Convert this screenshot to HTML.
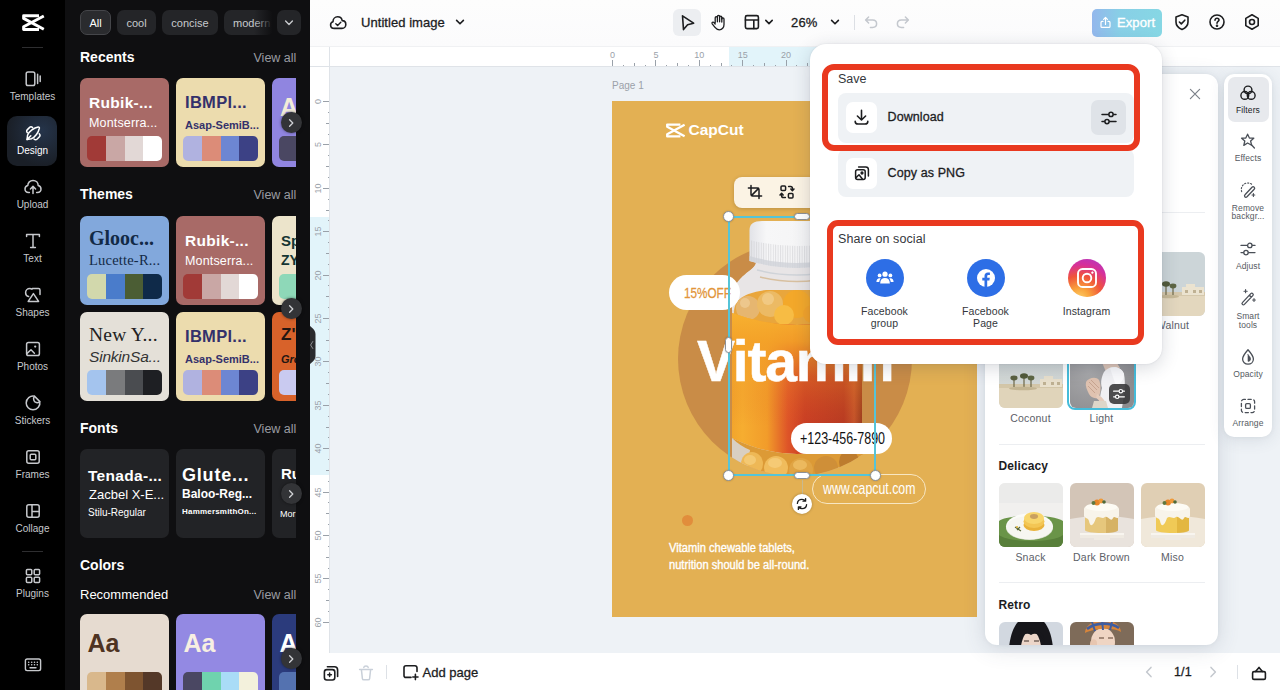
<!DOCTYPE html>
<html>
<head>
<meta charset="utf-8">
<title>Untitled image</title>
<style>
*{box-sizing:border-box;margin:0;padding:0}
html,body{width:1280px;height:690px;overflow:hidden;background:#eef2f6;font-family:"Liberation Sans",sans-serif;}
.abs{position:absolute}
#app{position:relative;width:1280px;height:690px;overflow:hidden}
/* ---------- left sidebar ---------- */
#side{position:absolute;left:0;top:0;width:65px;height:690px;background:#000}
.sitem{position:absolute;left:0;width:65px;text-align:center;color:#c6c8cc;font-size:10px;line-height:12px}
.sitem svg{display:block;margin:0 auto 2px auto}
.sdiv{position:absolute;left:22px;width:21px;height:1px;background:#2e2e30}
#designbtn{position:absolute;left:7px;top:116px;width:50px;height:50px;border-radius:10px;background:radial-gradient(circle at 70% 30%,#25344a 0%,#1a1f27 70%)}
/* ---------- design panel ---------- */
#panel{position:absolute;left:65px;top:0;width:245px;height:690px;background:#0f0f11;overflow:hidden}
.chip{position:absolute;top:10px;height:25px;border-radius:7px;background:#242528;color:#c8cacd;font-size:11px;line-height:27px;text-align:center}
.h1{position:absolute;left:15px;color:#fff;font-weight:bold;font-size:14px;line-height:18px}
.va{position:absolute;left:188.5px;color:#9a9ca1;font-size:12.5px;line-height:16px}
.card{position:absolute;width:89px;height:89px;border-radius:7px;overflow:hidden}
.pal{position:absolute;left:7px;top:57.500px;width:75px;height:25px;border-radius:5px;overflow:hidden;display:flex}
.pal i{flex:1;display:block;height:25px}
.t1,.t2{position:absolute;left:9px;white-space:nowrap;line-height:18px}
.arrow{position:absolute;left:215.500px;width:21px;height:21px;border-radius:11px;background:#333437;box-shadow:0 0 3px rgba(0,0,0,.5)}
.arrow svg{display:block;margin:.5px 0 0 .5px}
/* ---------- main ---------- */
#main{position:absolute;left:310px;top:0;width:970px;height:690px;background:#eef2f6}
#topbar{position:absolute;left:0;top:0;width:970px;height:47px;background:linear-gradient(180deg,#fdfdfd 0%,#fbfbfc 100%);border-bottom:1px solid #f0f1f3}
#hruler{position:absolute;left:0;top:46px;width:970px;height:21px;background:#fff;border-bottom:1px solid #dfe3e8}
#vruler{position:absolute;left:0;top:46px;width:20px;height:607px;background:#fff;border-right:1px solid #dfe3e8}
#botbar{position:absolute;left:0;top:653px;width:970px;height:37px;background:#fff}

.tk{position:absolute;bottom:0;width:1px;background:#9aa1a9;display:block}
.tn{position:absolute;top:4px;width:21px;text-align:center;font-size:9px;line-height:11px;color:#9aa1a9;font-weight:normal;display:block}
.tkv{position:absolute;right:0;height:1px;background:#9aa1a9;display:block}
.tnv{position:absolute;left:-2px;width:21px;height:21px;text-align:center;font-size:9px;line-height:21px;color:#9aa1a9;font-weight:normal;display:block;transform:rotate(-90deg)}
#page{position:absolute;left:302px;top:101px;width:365px;height:516px;background:#e3b053;overflow:hidden}
.tb{font-size:13px;line-height:17px;color:#1c1d1f;-webkit-text-stroke:.3px #1c1d1f;letter-spacing:.15px;white-space:nowrap}
.cx{transform-origin:0 50%;white-space:nowrap}
.hd{position:absolute;width:11px;height:11px;border-radius:50%;background:#fff;border:1px solid #8c9096;box-shadow:0 0 2px rgba(0,0,0,.2)}
.hp{position:absolute;border-radius:4px;background:#fff;border:1px solid #8c9096;box-shadow:0 0 2px rgba(0,0,0,.2)}
.fl{position:absolute;width:64px;text-align:center;font-size:10.500px;line-height:13px;color:#5c6068;letter-spacing:.2px;white-space:nowrap}
.fh{position:absolute;left:13.500px;font-size:12px;line-height:16px;font-weight:bold;color:#1c1d1f;letter-spacing:.1px}
.ri{left:14px}
.rl{position:absolute;left:0;width:48px;text-align:center;font-size:8.500px;line-height:10px;color:#555a62;letter-spacing:.1px}
.sl{position:absolute;top:261px;width:80px;text-align:center;font-size:10.500px;line-height:12.500px;color:#34373c;letter-spacing:.1px}
</style>
</head>
<body>
<div id="app">

<!-- MAIN -->
<div id="main">
  <div id="hruler"><div class="abs" style="left:419px;top:0;width:146px;height:20px;background:#e2f4fa"></div><i class="tk" style="left:302.0px;height:6px"></i><b class="tn" style="left:292.0px">0</b><i class="tk" style="left:345.4px;height:6px"></i><b class="tn" style="left:335.4px">5</b><i class="tk" style="left:388.8px;height:6px"></i><b class="tn" style="left:378.8px">10</b><i class="tk" style="left:432.2px;height:6px"></i><b class="tn" style="left:422.2px">15</b><i class="tk" style="left:475.6px;height:6px"></i><b class="tn" style="left:465.6px">20</b><i class="tk" style="left:519.0px;height:6px"></i><b class="tn" style="left:509.0px">25</b><i class="tk" style="left:562.4px;height:6px"></i><b class="tn" style="left:552.4px">30</b><i class="tk" style="left:605.8px;height:6px"></i><b class="tn" style="left:595.8px">35</b><i class="tk" style="left:649.2px;height:6px"></i><b class="tn" style="left:639.2px">40</b><i class="tk" style="left:312.9px;height:1px"></i><i class="tk" style="left:323.7px;height:3px"></i><i class="tk" style="left:334.6px;height:1px"></i><i class="tk" style="left:356.2px;height:1px"></i><i class="tk" style="left:367.1px;height:3px"></i><i class="tk" style="left:377.9px;height:1px"></i><i class="tk" style="left:399.6px;height:1px"></i><i class="tk" style="left:410.5px;height:3px"></i><i class="tk" style="left:421.4px;height:1px"></i><i class="tk" style="left:443.0px;height:1px"></i><i class="tk" style="left:453.9px;height:3px"></i><i class="tk" style="left:464.8px;height:1px"></i><i class="tk" style="left:486.4px;height:1px"></i><i class="tk" style="left:497.3px;height:3px"></i><i class="tk" style="left:508.1px;height:1px"></i><i class="tk" style="left:529.9px;height:1px"></i><i class="tk" style="left:540.7px;height:3px"></i><i class="tk" style="left:551.5px;height:1px"></i><i class="tk" style="left:573.2px;height:1px"></i><i class="tk" style="left:584.1px;height:3px"></i><i class="tk" style="left:595.0px;height:1px"></i><i class="tk" style="left:616.6px;height:1px"></i><i class="tk" style="left:627.5px;height:3px"></i><i class="tk" style="left:638.3px;height:1px"></i><i class="tk" style="left:660.0px;height:1px"></i></div>
  <div id="vruler"><div class="abs" style="left:0;top:171px;width:19px;height:258px;background:#e2f4fa"></div><i class="tkv" style="top:55.0px;width:6px"></i><b class="tnv" style="top:45.0px">0</b><i class="tkv" style="top:98.4px;width:6px"></i><b class="tnv" style="top:88.4px">5</b><i class="tkv" style="top:141.8px;width:6px"></i><b class="tnv" style="top:131.8px">10</b><i class="tkv" style="top:185.2px;width:6px"></i><b class="tnv" style="top:175.2px">15</b><i class="tkv" style="top:228.6px;width:6px"></i><b class="tnv" style="top:218.6px">20</b><i class="tkv" style="top:272.0px;width:6px"></i><b class="tnv" style="top:262.0px">25</b><i class="tkv" style="top:315.4px;width:6px"></i><b class="tnv" style="top:305.4px">30</b><i class="tkv" style="top:358.8px;width:6px"></i><b class="tnv" style="top:348.8px">35</b><i class="tkv" style="top:402.2px;width:6px"></i><b class="tnv" style="top:392.2px">40</b><i class="tkv" style="top:445.6px;width:6px"></i><b class="tnv" style="top:435.6px">45</b><i class="tkv" style="top:489.0px;width:6px"></i><b class="tnv" style="top:479.0px">50</b><i class="tkv" style="top:532.4px;width:6px"></i><b class="tnv" style="top:522.4px">55</b><i class="tkv" style="top:575.8px;width:6px"></i><b class="tnv" style="top:565.8px">60</b><i class="tkv" style="top:65.8px;width:1px"></i><i class="tkv" style="top:76.7px;width:3px"></i><i class="tkv" style="top:87.5px;width:1px"></i><i class="tkv" style="top:109.2px;width:1px"></i><i class="tkv" style="top:120.1px;width:3px"></i><i class="tkv" style="top:130.9px;width:1px"></i><i class="tkv" style="top:152.6px;width:1px"></i><i class="tkv" style="top:163.5px;width:3px"></i><i class="tkv" style="top:174.3px;width:1px"></i><i class="tkv" style="top:196.0px;width:1px"></i><i class="tkv" style="top:206.9px;width:3px"></i><i class="tkv" style="top:217.8px;width:1px"></i><i class="tkv" style="top:239.4px;width:1px"></i><i class="tkv" style="top:250.3px;width:3px"></i><i class="tkv" style="top:261.1px;width:1px"></i><i class="tkv" style="top:282.9px;width:1px"></i><i class="tkv" style="top:293.7px;width:3px"></i><i class="tkv" style="top:304.5px;width:1px"></i><i class="tkv" style="top:326.2px;width:1px"></i><i class="tkv" style="top:337.1px;width:3px"></i><i class="tkv" style="top:347.9px;width:1px"></i><i class="tkv" style="top:369.6px;width:1px"></i><i class="tkv" style="top:380.5px;width:3px"></i><i class="tkv" style="top:391.3px;width:1px"></i><i class="tkv" style="top:413.1px;width:1px"></i><i class="tkv" style="top:423.9px;width:3px"></i><i class="tkv" style="top:434.8px;width:1px"></i><i class="tkv" style="top:456.4px;width:1px"></i><i class="tkv" style="top:467.3px;width:3px"></i><i class="tkv" style="top:478.1px;width:1px"></i><i class="tkv" style="top:499.8px;width:1px"></i><i class="tkv" style="top:510.7px;width:3px"></i><i class="tkv" style="top:521.5px;width:1px"></i><i class="tkv" style="top:543.2px;width:1px"></i><i class="tkv" style="top:554.1px;width:3px"></i><i class="tkv" style="top:565.0px;width:1px"></i></div>
  <div class="abs" style="left:0;top:46px;width:20px;height:21px;background:#fff;border-right:1px solid #dfe3e8;border-bottom:1px solid #dfe3e8"></div>
  <div id="topbar">
    <svg class="abs" style="left:18px;top:12px" width="22" height="22" viewBox="0 0 22 22" fill="none" stroke="#1c1d1f" stroke-width="1.600" stroke-linecap="round" stroke-linejoin="round"><path d="M6.400 16.400 C4 16.400 2.600 14.800 2.600 13 C2.600 11.400 3.600 10.200 5 9.800 C5 6.800 7 4.800 9.600 4.800 C12 4.800 13.800 6.400 14.200 8.600 C16.400 8.600 17.800 10.200 17.800 12.400 C17.800 14.600 16.200 16.400 14 16.400 Z"/><path d="M7.800 11.800 L9.600 13.600 L12.800 10.200" stroke-width="1.400"/></svg>
    <div class="abs tb" style="left:51px;top:14px;letter-spacing:.05px">Untitled image</div>
    <svg class="abs" style="left:143px;top:15px" width="14" height="14" viewBox="0 0 14 14" fill="none" stroke="#1c1d1f" stroke-width="1.6" stroke-linecap="round" stroke-linejoin="round"><path d="M3.6 5.4 L7 8.8 L10.4 5.4"/></svg>
    <div class="abs" style="left:363px;top:9px;width:28px;height:27px;border-radius:6px;background:#eceef1"></div>
    <svg class="abs" style="left:367px;top:12px" width="20" height="20" viewBox="0 0 20 20" fill="none" stroke="#1c1d1f" stroke-width="1.6" stroke-linecap="round" stroke-linejoin="round"><path d="M5.5 3.8 L16.6 11.2 L10.6 12.8 L6.5 17.6 Z"/></svg>
    <svg class="abs" style="left:398px;top:12px" width="20" height="20" viewBox="0 0 20 20" fill="none" stroke="#1c1d1f" stroke-width="1.3" stroke-linecap="round" stroke-linejoin="round"><path d="M7.2 10.8 V5.8 a1.1 1.1 0 0 1 2.2 0 V4.5 a1.1 1.1 0 0 1 2.2 0 V5.3 a1.1 1.1 0 0 1 2.2 0 V7 a1.1 1.1 0 0 1 2.2 0 V12.4 C16 15.6 14 17.8 11.4 17.8 C9.2 17.8 8 16.8 6.8 15.2 L4.2 11.8 C3.4 10.600 5 9.400 6 10.600 L7.2 12"/><path d="M9.4 5.800 V9.800 M11.6 5 V9.800 M13.8 5.600 V10"/></svg>
    <svg class="abs" style="left:432px;top:12px" width="20" height="20" viewBox="0 0 20 20" fill="none" stroke="#1c1d1f" stroke-width="1.6" stroke-linecap="round" stroke-linejoin="round"><rect x="3.4" y="3.6" width="13" height="13" rx="1.6"/><path d="M3.4 8 H16.4 M11.8 8 V16.4"/></svg>
    <svg class="abs" style="left:452px;top:15px" width="14" height="14" viewBox="0 0 14 14" fill="none" stroke="#1c1d1f" stroke-width="1.6" stroke-linecap="round" stroke-linejoin="round"><path d="M3.8 5.4 L7 8.6 L10.2 5.4"/></svg>
    <div class="abs tb" style="left:481px;top:14px">26%</div>
    <svg class="abs" style="left:518px;top:15px" width="14" height="14" viewBox="0 0 14 14" fill="none" stroke="#1c1d1f" stroke-width="1.6" stroke-linecap="round" stroke-linejoin="round"><path d="M3.6 5.4 L7 8.8 L10.4 5.4"/></svg>
    <div class="abs" style="left:544px;top:15px;width:1px;height:15px;background:#dcdfe4"></div>
    <svg class="abs" style="left:552px;top:13px" width="18" height="18" viewBox="0 0 18 18" fill="none" stroke="#c4c8ce" stroke-width="1.5" stroke-linecap="round" stroke-linejoin="round"><path d="M4 7 H10.6 C13 7 14.6 8.6 14.6 10.8 C14.6 13 13 14.4 10.6 14.4 H8.4 M6.6 4 L3.6 7 L6.6 10"/></svg>
    <svg class="abs" style="left:584px;top:13px" width="18" height="18" viewBox="0 0 18 18" fill="none" stroke="#c4c8ce" stroke-width="1.5" stroke-linecap="round" stroke-linejoin="round"><path d="M14 7 H7.4 C5 7 3.4 8.6 3.4 10.8 C3.4 13 5 14.4 7.4 14.4 H9.6 M11.4 4 L14.4 7 L11.4 10"/></svg>
    <div class="abs" style="left:782px;top:9px;width:70px;height:28px;border-radius:5px;background:linear-gradient(90deg,#93b7ec 0%,#88cfe6 40%,#86d7e4 100%)"></div>
    <svg class="abs" style="left:788px;top:15px" width="15" height="15" viewBox="0 0 15 15" fill="none" stroke="#fff" stroke-width="1.2" stroke-linecap="round" stroke-linejoin="round"><path d="M5 6.4 H4 C3.4 6.4 3 6.8 3 7.4 V11.4 C3 12 3.4 12.4 4 12.4 H11 C11.600 12.4 12 12 12 11.4 V7.4 C12 6.8 11.6 6.400 11 6.4 H10 M7.5 9.400 V2.600 M5.6 4.4 L7.5 2.500 L9.4 4.4"/></svg>
    <div class="abs" style="left:807px;top:14px;color:#fff;font-size:13px;line-height:17px;-webkit-text-stroke:.35px #fff;letter-spacing:.1px">Export</div>
    <svg class="abs" style="left:862px;top:12px" width="20" height="20" viewBox="0 0 20 20" fill="none" stroke="#1c1d1f" stroke-width="1.6" stroke-linecap="round" stroke-linejoin="round"><path d="M10 2.800 L16 5 V10 C16 13.600 13.400 16 10 17.400 C6.6 16 4 13.600 4 10 V5 Z"/><path d="M7.400 10 L9.300 11.900 L12.800 8.200"/></svg>
    <svg class="abs" style="left:897px;top:12px" width="20" height="20" viewBox="0 0 20 20" fill="none" stroke="#1c1d1f" stroke-width="1.6" stroke-linecap="round" stroke-linejoin="round"><circle cx="10" cy="10" r="7"/><path d="M8 8.200 C8 6.900 8.900 6.200 10 6.200 C11.200 6.200 12 7 12 8 C12 9.400 10 9.500 10 11.200"/><circle cx="10" cy="13.700" r=".5" fill="#1c1d1f"/></svg>
    <svg class="abs" style="left:932px;top:12px" width="20" height="20" viewBox="0 0 20 20" fill="none" stroke="#1c1d1f" stroke-width="1.6" stroke-linecap="round" stroke-linejoin="round"><path d="M10 2.800 L16.200 6.400 V13.600 L10 17.200 L3.800 13.600 V6.400 Z"/><circle cx="10" cy="10" r="2.500"/></svg>
</div>
  <div class="abs" style="left:302px;top:79px;font-size:10px;line-height:13px;color:#9ba1a9">Page 1</div>
  <div id="page">
    <!-- capcut logo -->
    <svg class="abs" style="left:52.500px;top:21px" width="21" height="17" viewBox="0 0 21 17" fill="none" stroke="#fff" stroke-width="2.300" stroke-linejoin="round"><path d="M15.400 2.600 H2.200 V4.800 L19.600 14.200"/><path d="M15.400 14.400 H2.200 V12.200 L19.600 2.800"/></svg>
    <div class="abs" style="left:76.500px;top:18.500px;color:#fff;font-weight:bold;font-size:15.500px;line-height:20px;letter-spacing:0">CapCut</div>
    <!-- big circle -->
    <div class="abs" style="left:66px;top:141px;width:234px;height:234px;border-radius:50%;background:#c98c47"></div>
    <!-- bottle -->
    <svg class="abs" style="left:117px;top:116px" width="146" height="260" viewBox="729 217 146 260">
      <defs>
        <clipPath id="bc"><path d="M729 217 H875 V359 H912 A117 117 0 0 1 678 359 H729 Z"/></clipPath>
        <linearGradient id="lab" x1="0" y1="0" x2="1" y2="0"><stop offset="0" stop-color="#f3a52c"/><stop offset=".08" stop-color="#f6ad30"/><stop offset=".27" stop-color="#f29c2a"/><stop offset=".43" stop-color="#de5428"/><stop offset=".56" stop-color="#c93e24"/><stop offset=".86" stop-color="#b83a22"/><stop offset=".94" stop-color="#c4532a"/><stop offset="1" stop-color="#9c3c1e"/></linearGradient>
        <linearGradient id="laby" x1="0" y1="0" x2="0" y2="1"><stop offset="0" stop-color="#f7b030" stop-opacity="1"/><stop offset=".2" stop-color="#f4a228" stop-opacity=".92"/><stop offset=".45" stop-color="#f09a28" stop-opacity=".3"/><stop offset=".8" stop-color="#e06a20" stop-opacity="0"/></linearGradient>
        <linearGradient id="cap" x1="0" y1="0" x2="1" y2="0"><stop offset="0" stop-color="#e2e3e8"/><stop offset=".18" stop-color="#f7f7f8"/><stop offset=".75" stop-color="#f4f4f5"/><stop offset="1" stop-color="#dcdde0"/></linearGradient>
        <pattern id="rdg" width="2.400" height="10" patternUnits="userSpaceOnUse"><rect width="1" height="10" fill="#c9cace" opacity=".55"/></pattern>
      </defs>
      <g clip-path="url(#bc)">
        <!-- glass body -->
        <path d="M756 262 H838 C838 271 860 275 862 297 V480 H732 V297 C734 275 756 271 756 262 Z" fill="#e3d8cc"/>
        <path d="M756 262 H838 C838 271 860 275 862 297 V310 H732 V297 C734 275 756 271 756 262 Z" fill="#e9e8ea" opacity=".85"/>
        <!-- gummies top -->
        <path d="M734 312 C734 296 752 292 766 290 H832 C846 290 860 296 860 312 V330 H734 Z" fill="#e9a63c"/>
        <circle cx="748" cy="308" r="12" fill="#e6b670"/><circle cx="770" cy="304" r="13" fill="#ecba64"/><circle cx="797" cy="304" r="14" fill="#f3a82a"/><circle cx="824" cy="302" r="13" fill="#f5b030"/><circle cx="848" cy="308" r="12" fill="#ef9f28"/><circle cx="784" cy="315" r="10" fill="#f7bc44"/><circle cx="812" cy="314" r="9" fill="#f2a22a"/>
        <circle cx="745" cy="303" r="5" fill="#f0cf98" opacity=".7"/><circle cx="768" cy="299" r="6" fill="#f3d090" opacity=".7"/>
        <!-- neck rings -->
        <path d="M757 270 Q797 280 837 270" stroke="#cfd3d8" stroke-width="1.500" fill="none"/><path d="M760 277 Q797 286 834 277" stroke="#d8c0a0" stroke-width="1.500" fill="none"/>
        <!-- label -->
        <path d="M732 313 Q797 337 862 313 V438 Q797 470 732 438 Z" fill="url(#lab)"/>
        <path d="M732 313 Q797 337 862 313 V438 Q797 470 732 438 Z" fill="url(#laby)"/>
        <!-- gummies bottom -->
        <path d="M732 438 Q797 470 862 438 V480 H732 Z" fill="#dc9a36"/>
        <path d="M732 438 Q740 446 750 450 L746 480 H732 Z" fill="#d9cfc2"/>
        <ellipse cx="752" cy="464" rx="11" ry="12" fill="#eeb856"/><ellipse cx="776" cy="468" rx="12" ry="12" fill="#f0bc5c"/><ellipse cx="801" cy="470" rx="12" ry="12" fill="#e0a444"/><ellipse cx="826" cy="468" rx="12" ry="12" fill="#cf8f38"/><ellipse cx="849" cy="462" rx="10" ry="12" fill="#bd7c2e"/>
        <ellipse cx="750" cy="460" rx="6" ry="5" fill="#f6d080" opacity=".7"/><ellipse cx="775" cy="463" rx="7" ry="5" fill="#f6d080" opacity=".7"/><ellipse cx="800" cy="465" rx="7" ry="5" fill="#f4c870" opacity=".6"/>
        <!-- cap -->
        <path d="M749.500 230 Q749.500 221 762 221 H832 Q844.500 221 844.500 230 V261 Q797 275 749.500 261 Z" fill="url(#cap)"/>
        <path d="M749.500 240 Q797 252 844.500 240 V261 Q797 275 749.500 261 Z" fill="url(#rdg)"/>
        <path d="M749.500 256 V261 Q797 275 844.500 261 V256 Q797 270 749.500 256 Z" fill="#d0d2d8" opacity=".8"/>
      </g>
    </svg>
    <!-- 15%OFF -->
    <div class="abs" style="left:57px;top:174px;width:71px;height:35px;border-radius:18px;background:#fff"></div>
    <div class="abs cx" style="left:72px;top:183px;color:#e2953a;font-size:15px;line-height:18px;transform:scaleX(.78);-webkit-text-stroke:.3px #e2953a">15%OFF</div>
    <!-- Vitamin -->
    <div class="abs" style="left:85px;top:230px;color:#fff;font-weight:bold;font-size:57px;line-height:60px;letter-spacing:-1.200px;white-space:nowrap;-webkit-text-stroke:.5px #fff">Vitamin</div>
    <!-- phone -->
    <div class="abs" style="left:179px;top:322px;width:101px;height:31px;border-radius:16px;background:#fff"></div>
    <div class="abs cx" style="left:188px;top:328px;color:#111;font-size:16px;line-height:20px;transform:scaleX(.78)">+123-456-7890</div>
    <!-- www -->
    <div class="abs" style="left:200px;top:373px;width:114px;height:30px;border-radius:15px;border:1.500px solid #f7e6c2"></div>
    <div class="abs cx" style="left:211px;top:378px;color:#fff;font-size:16px;line-height:20px;transform:scaleX(.77)">www.capcut.com</div>
    <!-- dot -->
    <div class="abs" style="left:70px;top:414px;width:11px;height:11px;border-radius:50%;background:#e18d3c"></div>
    <div class="abs cx" style="left:57px;top:439px;color:#fff;font-size:12.500px;line-height:16.500px;transform:scaleX(.89);-webkit-text-stroke:.35px #fff">Vitamin chewable tablets,<br>nutrition should be all-round.</div>
</div>

  <!-- floating toolbar -->
  <div class="abs" style="left:424px;top:177px;width:150px;height:31px;border-radius:8px;background:#fbf3e4;box-shadow:0 1px 4px rgba(0,0,0,.18)"></div>
  <svg class="abs" style="left:435px;top:182px" width="20" height="20" viewBox="0 0 20 20" fill="none" stroke="#1c1d1f" stroke-width="1.500" stroke-linecap="round" stroke-linejoin="round"><path d="M6 3.400 V12.400 C6 13.400 6.600 14 7.600 14 H16.600 M3.400 6 H12.400 C13.400 6 14 6.600 14 7.600 V16.600 M13.600 6.400 L6.400 13.600" /></svg>
  <svg class="abs" style="left:467px;top:182px" width="20" height="20" viewBox="0 0 20 20" fill="none" stroke="#1c1d1f" stroke-width="1.500" stroke-linecap="round" stroke-linejoin="round"><rect x="4" y="4" width="4.600" height="4.600" rx="1"/><rect x="11.400" y="11.400" width="4.600" height="4.600" rx="1"/><path d="M11.600 4.400 H13.600 C14.800 4.400 15.400 5 15.400 6.200 V8.400 M13.800 7 L15.400 8.600 L17 7 M8.400 15.600 H6.400 C5.200 15.600 4.600 15 4.600 13.800 V11.600 M3 13 L4.600 11.400 L6.200 13"/></svg>
  <!-- selection -->
  <div class="abs" style="left:417.500px;top:216px;width:148.500px;height:260px;border:2px solid #55c4d8"></div>
  <div class="abs" style="left:492px;top:480px;width:1px;height:14px;background:#c9b98f"></div>
  <div class="hd" style="left:413px;top:211px"></div>
  <div class="hd" style="left:413px;top:469.500px"></div>
  <div class="hd" style="left:559.500px;top:469.500px"></div>
  <div class="hp" style="left:484px;top:212.500px;width:16px;height:7px"></div>
  <div class="hp" style="left:484px;top:471.500px;width:16px;height:7px"></div>
  <div class="hp" style="left:415px;top:337px;width:7px;height:16px"></div>
  <div class="abs" style="left:482px;top:494px;width:20px;height:20px;border-radius:50%;background:#fff;box-shadow:0 0 3px rgba(0,0,0,.3)"></div>
  <svg class="abs" style="left:484px;top:496px" width="16" height="16" viewBox="0 0 16 16" fill="none" stroke="#1c1d1f" stroke-width="1.300" stroke-linecap="round" stroke-linejoin="round"><path d="M3.400 7.400 C3.600 5 5.600 3.400 8 3.400 C9.400 3.400 10.600 4 11.400 5 M12.600 8.600 C12.400 11 10.400 12.600 8 12.600 C6.600 12.600 5.400 12 4.600 11 M11.600 2.600 V5.200 H9 M4.400 13.400 V10.800 H7"/></svg>
  <div id="botbar">
    <svg class="abs" style="left:11px;top:10px" width="20" height="20" viewBox="0 0 20 20" fill="none" stroke="#1c1d1f" stroke-width="1.6" stroke-linecap="round" stroke-linejoin="round"><rect x="3.400" y="6.600" width="10.400" height="10.400" rx="2.400"/><path d="M6.400 3.800 H13.400 C15.400 3.800 16.600 5 16.600 7 V13.400"/><path d="M8.600 10 V13.600 M6.800 11.800 H10.400" stroke-width="1.500"/></svg>
    <svg class="abs" style="left:46px;top:10px" width="20" height="20" viewBox="0 0 20 20" fill="none" stroke="#c9d0d9" stroke-width="1.500" stroke-linecap="round" stroke-linejoin="round"><path d="M3.600 6.600 H16.400 M5.400 6.600 L6.400 15.600 C6.500 16.400 7 16.800 7.800 16.800 H12.200 C13 16.800 13.500 16.400 13.600 15.600 L14.600 6.600 M7.800 4.400 C8 3.400 9 3 10 3 C11 3 12 3.400 12.200 4.400"/></svg>
    <div class="abs" style="left:76px;top:12px;width:1px;height:14px;background:#dde1e6"></div>
    <svg class="abs" style="left:90px;top:9px" width="22" height="22" viewBox="0 0 22 22" fill="none" stroke="#1c1d1f" stroke-width="1.6" stroke-linecap="round" stroke-linejoin="round"><path d="M17 9.400 V5.800 C17 4.600 16.200 3.800 15 3.800 H6 C4.800 3.800 4 4.600 4 5.800 V13.400 C4 14.600 4.800 15.400 6 15.400 H11"/><path d="M15.400 12.400 V17.600 M12.800 15 H18"/></svg>
    <div class="abs tb" style="left:112.500px;top:11px;letter-spacing:0">Add page</div>
    <svg class="abs" style="left:831px;top:11px" width="16" height="16" viewBox="0 0 16 16" fill="none" stroke="#c4c8ce" stroke-width="1.500" stroke-linecap="round" stroke-linejoin="round"><path d="M10 3.400 L5.600 8 L10 12.600"/></svg>
    <div class="abs tb" style="left:864px;top:11px;font-size:12.5px">1/1</div>
    <svg class="abs" style="left:895px;top:11px" width="16" height="16" viewBox="0 0 16 16" fill="none" stroke="#c4c8ce" stroke-width="1.500" stroke-linecap="round" stroke-linejoin="round"><path d="M6 3.400 L10.400 8 L6 12.600"/></svg>
    <div class="abs" style="left:927px;top:12px;width:1px;height:14px;background:#dde1e6"></div>
    <svg class="abs" style="left:939px;top:10px" width="20" height="20" viewBox="0 0 20 20" fill="none" stroke="#1c1d1f" stroke-width="1.6" stroke-linecap="round" stroke-linejoin="round"><rect x="3.600" y="8.600" width="12.800" height="7.800" rx="1.400"/><path d="M6.600 8.400 L10 4.400 L13.400 8.400"/></svg>
</div>
</div>


<!-- FILTER PANEL -->
<div id="fpanel" class="abs" style="left:985px;top:74px;width:233px;height:571px;border-radius:12px;background:#fff;overflow:hidden;box-shadow:0 4px 22px rgba(60,75,100,.16),0 0 4px rgba(90,100,120,.08)">
  <svg class="abs" style="left:202px;top:12px" width="16" height="16" viewBox="0 0 16 16" fill="none" stroke="#7d828a" stroke-width="1.200" stroke-linecap="round"><path d="M3.400 3.400 L12.600 12.600 M12.600 3.400 L3.400 12.600"/></svg>
  <div class="abs" style="left:13.500px;top:138px;width:206px;height:1px;background:#eceef1"></div>
  <svg class="abs" style="left:155.500px;top:178px;border-radius:6px;" width="64" height="64" viewBox="0 0 64 64"><rect width="64" height="64" fill="#ccd5d8"/><rect y="40" width="64" height="24" fill="#e3d7be"/><rect y="40" width="64" height="4" fill="#d5c8ac"/><rect x="41" y="35" width="22" height="8" fill="#ebe3d0"/><rect x="45" y="32" width="9" height="4" fill="#ebe3d0"/><rect x="44" y="38" width="3" height="3" fill="#bfb193"/><rect x="52" y="38" width="3" height="3" fill="#bfb193"/><rect x="58" y="38" width="3" height="3" fill="#bfb193"/><path d="M25 44 V33 M32 43 V35" stroke="#6d6848" stroke-width="1.200"/><ellipse cx="25" cy="32" rx="4" ry="2.800" fill="#525a3a"/><ellipse cx="32" cy="34" rx="3.400" ry="2.400" fill="#5e6644"/><ellipse cx="28" cy="44.500" rx="10" ry="1.800" fill="#c6b896"/></svg>
  <div class="fl" style="left:155.500px;top:245px">Walnut</div>
  <svg class="abs" style="left:13.500px;top:270px;border-radius:6px;" width="64" height="64" viewBox="0 0 64 64"><defs><linearGradient id="skyD" x1="0" y1="0" x2="0" y2="1"><stop offset="0" stop-color="#c9d2d5"/><stop offset="1" stop-color="#dadcd6"/></linearGradient></defs><rect width="64" height="64" fill="url(#skyD)"/><rect y="40" width="64" height="24" fill="#e0d4ba"/><rect y="40" width="64" height="4" fill="#d3c6a8"/><rect x="41" y="35" width="22" height="8" fill="#e9e0cc"/><rect x="45" y="32" width="9" height="4" fill="#e9e0cc"/><rect x="44" y="38" width="3" height="3" fill="#bfb193"/><rect x="52" y="38" width="3" height="3" fill="#bfb193"/><rect x="58" y="38" width="3" height="3" fill="#bfb193"/><path d="M15 43 V35 M25 44 V33 M32 43 V35" stroke="#6d6848" stroke-width="1.200"/><ellipse cx="15" cy="34" rx="3.600" ry="2.400" fill="#5a6040"/><ellipse cx="25" cy="32" rx="4" ry="2.800" fill="#525a3a"/><ellipse cx="32" cy="34" rx="3.400" ry="2.400" fill="#5e6644"/><ellipse cx="24" cy="44.500" rx="14" ry="1.800" fill="#c2b492"/></svg>
  <div class="abs" style="left:82px;top:267px;width:69px;height:69px;border-radius:8px;border:2px solid #45bcda"></div>
  <svg class="abs" style="left:85px;top:270px;border-radius:6px;" width="64" height="64" viewBox="0 0 64 64"><defs><radialGradient id="lg" cx=".3" cy=".45" r=".7"><stop offset="0" stop-color="#a8a8aa"/><stop offset="1" stop-color="#8d8d90"/></radialGradient></defs><rect width="64" height="64" fill="url(#lg)"/><path d="M30 8 C34 12 40 14 44 14 L50 24 L36 28 C34 22 30 16 30 8 Z" fill="#dcc4b6"/><path d="M34 28 C38 22 50 20 54 30 C56 40 54 52 52 64 H28 C30 56 30 50 32 44 C30 38 32 32 34 28 Z" fill="#f1f1f4"/><path d="M40 24 C46 22 52 24 54 30 C54 36 50 40 46 42 Z" fill="#fbfbfd"/><path d="M16 38 C18 34 26 32 29 36 C31 40 31 48 29 52 C27 56 21 54 19 50 C17 46 15 42 16 38 Z" fill="#dfc2b0"/><path d="M19 38 L27 46 M21 36 L29 44 M18 42 L25 49" stroke="#c4a08c" stroke-width=".9"/><path d="M27 50 C31 52 35 56 37 62 L33 64 C31 58 29 56 26 54 Z" fill="#e4cbbb"/><path d="M24 57 H36 L38 64 H22 Z" fill="#ddd6c9"/></svg>
  <div class="abs" style="left:124px;top:309.500px;width:20.500px;height:20px;border-radius:5px;background:rgba(58,58,60,.9)"></div>
  <svg class="abs" style="left:126.300px;top:311.500px" width="16" height="16" viewBox="0 0 16 16" fill="none" stroke="#fff" stroke-width="1.200" stroke-linecap="round"><path d="M2.600 5.200 H13.400 M2.600 10.800 H13.400"/><circle cx="9.800" cy="5.200" r="1.700" fill="#38383c"/><circle cx="6.200" cy="10.800" r="1.700" fill="#38383c"/></svg>
  <div class="fl" style="left:13.500px;top:338px">Coconut</div>
  <div class="fl" style="left:84.500px;top:338px">Light</div>
  <div class="abs" style="left:13.500px;top:370px;width:206px;height:1px;background:#eceef1"></div>
  <div class="fh" style="top:384px">Delicacy</div>
  <svg class="abs" style="left:13.500px;top:409px;border-radius:6px;" width="64" height="64" viewBox="0 0 64 64"><rect width="64" height="64" fill="#f1f0ee"/><rect width="64" height="20" fill="#ebebea"/><path d="M0 38 C10 31 54 31 64 38 V64 H0 Z" fill="#6a9448"/><path d="M0 52 C10 60 54 60 64 52 V64 H0 Z" fill="#587f3a"/><ellipse cx="30.500" cy="43.500" rx="23.500" ry="13" fill="#fbfbf8"/><ellipse cx="30.500" cy="45" rx="23.500" ry="12" fill="#f3f3ee" opacity=".7"/><ellipse cx="35" cy="42" rx="10.500" ry="6" fill="#e9b23a"/><ellipse cx="35" cy="38.500" rx="10.500" ry="6.500" fill="#f3c654"/><ellipse cx="35" cy="35" rx="10" ry="6" fill="#f8d66c"/><ellipse cx="35" cy="33.500" rx="4" ry="2.400" fill="#c9a060"/><path d="M16 44 L22 48 M18 47 L21 44" stroke="#5b6a3a" stroke-width="1.200"/><circle cx="18" cy="44" r="1" fill="#e0b030"/></svg><svg class="abs" style="left:84.500px;top:409px;border-radius:6px;" width="64" height="64" viewBox="0 0 64 64"><rect width="64" height="64" fill="#d3c5b7"/><path d="M0 36 C20 32 44 32 64 36 V64 H0 Z" fill="#e9e3dd"/><path d="M10 51 H54 V55 H40 V57 H24 V55 H10 Z" fill="#efeae2"/><rect x="10" y="50" width="44" height="2" fill="#f8f5ef"/><path d="M15 30 H48 V47 C48 51 15 51 15 47 Z" fill="#e6c77c"/><path d="M36 30 H48 V47 C48 49 42 50 36 50 Z" fill="#c9a050" opacity=".55"/><path d="M14 26 C14 19 49 19 49 26 V33 C47 38 45 32 43 35 C41 40 38 32 35 34 C32 37 29 32 26 35 C23 44 20 44 19 38 C18 34 15 36 14 33 Z" fill="#f8f4ea"/><ellipse cx="31.500" cy="24" rx="16" ry="4" fill="#fdfbf4"/><circle cx="27" cy="19.500" r="3" fill="#e8862a"/><circle cx="31" cy="18" r="2.400" fill="#ef9a3a"/><circle cx="23.500" cy="20" r="2" fill="#60783e"/><circle cx="34" cy="19" r="1.800" fill="#4f6a3a"/></svg><svg class="abs" style="left:155.500px;top:409px;border-radius:6px;" width="64" height="64" viewBox="0 0 64 64"><rect width="64" height="64" fill="#e0cfb4"/><path d="M0 36 C20 32 44 32 64 36 V64 H0 Z" fill="#f0e8da"/><path d="M10 51 H54 V55 H40 V57 H24 V55 H10 Z" fill="#efeae2"/><rect x="10" y="50" width="44" height="2" fill="#f8f5ef"/><path d="M15 30 H48 V47 C48 51 15 51 15 47 Z" fill="#f0ca56"/><path d="M36 30 H48 V47 C48 49 42 50 36 50 Z" fill="#d9a830" opacity=".55"/><path d="M14 26 C14 19 49 19 49 26 V33 C47 38 45 32 43 35 C41 40 38 32 35 34 C32 37 29 32 26 35 C23 44 20 44 19 38 C18 34 15 36 14 33 Z" fill="#f8f4ea"/><ellipse cx="31.500" cy="24" rx="16" ry="4" fill="#fdfbf4"/><circle cx="27" cy="19.500" r="3" fill="#e8862a"/><circle cx="31" cy="18" r="2.400" fill="#ef9a3a"/><circle cx="23.500" cy="20" r="2" fill="#60783e"/><circle cx="34" cy="19" r="1.800" fill="#4f6a3a"/></svg>
  <div class="fl" style="left:13.500px;top:476.500px">Snack</div>
  <div class="fl" style="left:84.500px;top:476.500px">Dark Brown</div>
  <div class="fl" style="left:155.500px;top:476.500px">Miso</div>
  <div class="abs" style="left:13.500px;top:508px;width:206px;height:1px;background:#eceef1"></div>
  <div class="fh" style="top:523px">Retro</div>
  <svg class="abs" style="left:13.500px;top:548px;border-radius:6px;" width="64" height="64" viewBox="0 0 64 64"><rect width="64" height="64" fill="#d2d8e0"/><path d="M12 64 C6 30 10 -6 32 -6 C54 -6 58 30 52 64 Z" fill="#17171b"/><path d="M21 64 C19 30 22 9 32 9 C42 9 45 30 43 64 Z" fill="#ecd6c9"/><path d="M18 20 C20 2 44 2 46 20 C42 12 36 10 32 13 C28 10 22 12 18 20 Z" fill="#17171b"/><path d="M25 19 H30 M35 19 H40" stroke="#3a2a24" stroke-width="1.200"/></svg><svg class="abs" style="left:84.500px;top:548px;border-radius:6px;" width="64" height="64" viewBox="0 0 64 64"><rect width="64" height="64" fill="#7e6b59"/><ellipse cx="33" cy="20" rx="12" ry="14" fill="#efd5c3"/><path d="M15 11 C16 -6 50 -6 51 10 C44 5 24 6 15 11 Z" fill="#d8853a"/><path d="M17 7 C26 0 40 0 49 6" stroke="#3f5da0" stroke-width="2.600" fill="none"/><path d="M22 0 L25 9 M32 -2 L33 8 M42 0 L40 8" stroke="#3f5da0" stroke-width="2"/><path d="M20 22 C20 16 27 16 27 21 V34 H20 Z" fill="#e7c6b0"/><path d="M29 16 H34 M38 16 H43" stroke="#5a4030" stroke-width="1.200"/></svg>
</div>
<!-- RIGHT TOOLBAR -->
<div id="rtool" class="abs" style="left:1224px;top:74px;width:48px;height:363px;border-radius:10px;background:#fff;box-shadow:0 3px 16px rgba(60,75,100,.12),0 0 4px rgba(90,100,120,.08)">
  <div class="abs" style="left:4px;top:3px;width:41px;height:45px;border-radius:7px;background:#e7e9ed"></div>
  <svg class="abs ri" style="top:9px" width="20" height="20" viewBox="0 0 20 20" fill="none" stroke="#1c1d1f" stroke-width="1.400"><circle cx="10" cy="7" r="3.900"/><circle cx="6.800" cy="12.400" r="3.900"/><circle cx="13.200" cy="12.400" r="3.900"/></svg>
  <div class="rl" style="top:30.500px;color:#1c1d1f">Filters</div>
  <svg class="abs ri" style="top:57px" width="20" height="20" viewBox="0 0 20 20" fill="none" stroke="#4a4f57" stroke-width="1.300" stroke-linecap="round" stroke-linejoin="round"><path d="M9.600 3.200 L11.400 7 L15.800 7.200 L12.600 10 L13.600 14.200 L9.600 12 L5.800 14.400 L6.800 10 L3.600 7.200 L7.800 7 Z"/><path d="M13.400 13.800 L16.400 17"/></svg>
  <div class="rl" style="top:79px">Effects</div>
  <svg class="abs ri" style="top:106px" width="20" height="20" viewBox="0 0 20 20" fill="none" stroke="#4a4f57" stroke-width="1.300" stroke-linecap="round" stroke-linejoin="round"><path d="M13.600 4.200 C11.400 2.600 8 2.600 5.800 4.400 C3.200 6.400 2.600 10 4.200 12.800" stroke-dasharray="1.200 1.800" stroke-width="1.100"/><path d="M7 14.800 L14 7.200 C14.600 6.600 15.600 6.600 16.200 7.200 C16.800 7.800 16.800 8.600 16.200 9.200 L9 16.800 C8.400 17.400 7.400 17.400 6.800 16.800 C6.400 16.200 6.400 15.400 7 14.800 Z"/><path d="M15.400 13.600 V16.400 M14 15 H16.800" stroke-width="1.100"/></svg>
  <div class="rl" style="top:129.500px;line-height:8.600px">Remove<br>backgr...</div>
  <svg class="abs ri" style="top:164.500px" width="20" height="20" viewBox="0 0 20 20" fill="none" stroke="#4a4f57" stroke-width="1.300" stroke-linecap="round" stroke-linejoin="round"><path d="M3 6.400 H17 M3 13.600 H17"/><circle cx="11.800" cy="6.400" r="2.200" fill="#fff"/><circle cx="8" cy="13.600" r="2.200" fill="#fff"/></svg>
  <div class="rl" style="top:187px">Adjust</div>
  <svg class="abs ri" style="top:213px" width="20" height="20" viewBox="0 0 20 20" fill="none" stroke="#4a4f57" stroke-width="1.300" stroke-linecap="round" stroke-linejoin="round"><path d="M4.400 15.600 L12.800 6.600 C13.400 6 14.200 6 14.800 6.600 C15.400 7.200 15.400 8 14.800 8.600 L6.400 17.400 C5.800 18 5 18 4.400 17.400 C3.800 16.800 3.800 16.200 4.400 15.600 Z M11.400 8.200 L13.200 10"/><path d="M7.600 2.600 V5.800 M6 4.200 H9.200 M16 11.600 V14.400 M14.600 13 H17.400" stroke-width="1.100"/></svg>
  <div class="rl" style="top:238px;line-height:9px">Smart<br>tools</div>
  <svg class="abs ri" style="top:273px" width="20" height="20" viewBox="0 0 20 20" fill="none" stroke="#4a4f57" stroke-width="1.300" stroke-linecap="round" stroke-linejoin="round"><path d="M10 2.800 C13 6.200 15.400 9 15.400 12 C15.400 15 13 17.200 10 17.200 C7 17.200 4.600 15 4.600 12 C4.600 9 7 6.200 10 2.800 Z"/><path d="M10 7.600 V14.400 C11.600 14.400 12.600 13.400 12.600 12 C12.600 10.400 11.400 9.200 10 7.600 Z" fill="#4a4f57" stroke-width=".6"/></svg>
  <div class="rl" style="top:295px">Opacity</div>
  <svg class="abs ri" style="top:321.500px" width="20" height="20" viewBox="0 0 20 20" fill="none" stroke="#4a4f57" stroke-width="1.300" stroke-linecap="round" stroke-linejoin="round"><rect x="3.400" y="3.400" width="13.200" height="13.200" rx="2.400" stroke-dasharray="3.200 2.600" stroke-dashoffset="1.600"/><rect x="7.600" y="7.600" width="4.800" height="4.800" rx="1.200"/></svg>
  <div class="rl" style="top:344px">Arrange</div>
</div>

<!-- EXPORT POPUP -->
<div id="popup" class="abs" style="left:810px;top:43.500px;width:352px;height:320px;border-radius:16px;background:#fff;box-shadow:0 4px 18px rgba(40,50,70,.18),0 0 2px rgba(40,50,70,.12)">
  <div class="abs" style="left:28px;top:27px;font-size:12.500px;line-height:16px;color:#34373c;letter-spacing:0">Save</div>
  <div class="abs" style="left:28px;top:49px;width:296px;height:50px;border-radius:8px;background:#eff2f5"></div>
  <div class="abs" style="left:36px;top:58px;width:31px;height:31px;border-radius:7px;background:#fff"></div>
  <svg class="abs" style="left:41px;top:63px" width="21" height="21" viewBox="0 0 21 21" fill="none" stroke="#1c1d1f" stroke-width="1.600" stroke-linecap="round" stroke-linejoin="round"><path d="M10.500 3.400 V12.800 M6.400 9 L10.500 13 L14.600 9 M4.200 14.400 C4.200 16.400 5 17 7 17 H14 C16 17 16.800 16.400 16.800 14.400"/></svg>
  <div class="abs tb" style="left:77.500px;top:65.500px;font-size:12.500px;letter-spacing:.1px">Download</div>
  <div class="abs" style="left:281px;top:56.500px;width:35px;height:35px;border-radius:7px;background:#dfe3e8"></div>
  <svg class="abs" style="left:288.500px;top:64px" width="20" height="20" viewBox="0 0 20 20" fill="none" stroke="#1c1d1f" stroke-width="1.500" stroke-linecap="round"><path d="M3 6.400 H17 M3 13.600 H17"/><circle cx="12" cy="6.400" r="2.100" fill="#dfe3e8"/><circle cx="8" cy="13.600" r="2.100" fill="#dfe3e8"/></svg>
  <div class="abs" style="left:28px;top:105px;width:296px;height:48px;border-radius:8px;background:#eff2f5"></div>
  <div class="abs" style="left:36px;top:114px;width:31px;height:31px;border-radius:7px;background:#fff"></div>
  <svg class="abs" style="left:41.500px;top:119.500px" width="20" height="20" viewBox="0 0 20 20" fill="none" stroke="#1c1d1f" stroke-width="1.500" stroke-linecap="round" stroke-linejoin="round"><rect x="3.600" y="6.800" width="9.600" height="9.600" rx="2"/><path d="M6.600 4 H13.800 C15.400 4 16.400 5 16.400 6.600 V13"/><path d="M4 14.600 L7 11.800 L10.400 16"/><circle cx="10" cy="10" r=".900" fill="#1c1d1f"/></svg>
  <div class="abs tb" style="left:77.500px;top:121px;font-size:12.500px;letter-spacing:.1px">Copy as PNG</div>
  <div class="abs" style="left:12px;top:20.500px;width:318px;height:87px;border-radius:12px;border:6px solid #e9391f"></div>
  <div class="abs" style="left:16.500px;top:176.500px;width:317px;height:124.500px;border-radius:11px;border:6px solid #e9391f"></div>
  <div class="abs" style="left:28px;top:187px;font-size:12.500px;line-height:16px;color:#34373c;letter-spacing:.1px">Share on social</div>
  <div class="abs" style="left:55.500px;top:215.500px;width:38px;height:38px;border-radius:50%;background:#2d6ee6"></div>
  <svg class="abs" style="left:64.500px;top:224.500px" width="20" height="20" viewBox="0 0 20 20" fill="#fff"><circle cx="10" cy="6.200" r="2.600"/><circle cx="4.600" cy="7.400" r="1.900"/><circle cx="15.400" cy="7.400" r="1.900"/><path d="M5.200 15.400 C5.200 11.800 7 10 10 10 C13 10 14.800 11.800 14.800 15.400 Z"/><path d="M1.400 14 C1.400 11.600 2.600 10.200 4.600 10.200 C5 10.200 5.400 10.300 5.700 10.400 C4.800 11.400 4.400 12.600 4.300 14 Z"/><path d="M18.600 14 C18.600 11.600 17.400 10.200 15.400 10.200 C15 10.200 14.600 10.300 14.300 10.400 C15.200 11.400 15.600 12.600 15.700 14 Z"/></svg>
  <div class="abs" style="left:156.500px;top:215.500px;width:38px;height:38px;border-radius:50%;background:#2d6ee6"></div>
  <svg class="abs" style="left:165.500px;top:224.500px" width="20" height="20" viewBox="0 0 20 20"><circle cx="10" cy="10" r="9" fill="#fff"/><path d="M11.200 19 V12.400 H13.400 L13.800 9.800 H11.200 V8.200 C11.200 7.400 11.600 6.900 12.600 6.900 H13.900 V4.600 C13.500 4.500 12.700 4.400 11.900 4.400 C9.800 4.400 8.500 5.700 8.500 7.900 V9.800 H6.300 V12.400 H8.500 V19 Z" fill="#2d6ee6"/></svg>
  <div class="abs" style="left:257.500px;top:215.500px;width:38px;height:38px;border-radius:50%;background:radial-gradient(circle at 30% 105%,#fdd069 0%,#f9a33c 22%,#f0543a 48%,#d6309a 72%,#a63ad0 100%)"></div>
  <svg class="abs" style="left:264.500px;top:222.500px" width="24" height="24" viewBox="0 0 24 24" fill="none" stroke="#fff" stroke-width="1.900"><rect x="3" y="3" width="18" height="18" rx="4.600"/><circle cx="12" cy="12" r="4.300"/><circle cx="17.400" cy="6.600" r=".900" fill="#fff" stroke-width=".6"/></svg>
  <div class="sl" style="left:34.500px">Facebook<br>group</div>
  <div class="sl" style="left:135.500px">Facebook<br>Page</div>
  <div class="sl" style="left:236.500px">Instagram</div>
</div>
<svg class="abs" style="left:308px;top:321px" width="9" height="48" viewBox="0 0 9 48"><path d="M0 0 C0 6 7.500 7 7.500 13 V35 C7.500 41 0 42 0 48 Z" fill="#2a2b2e"/><path d="M4.800 20.500 L2.600 24 L4.800 27.500" stroke="#8a8c90" stroke-width="1" fill="none" stroke-linecap="round"/></svg>
<!-- PANEL -->
<div id="panel">
  <div class="chip" style="left:15px;width:31px;background:#2a2b2e;border:1px solid #45464a;color:#fff;line-height:25px">All</div>
  <div class="chip" style="left:52px;width:39px">cool</div>
  <div class="chip" style="left:97px;width:56px">concise</div>
  <div class="chip" style="left:159px;width:50px;text-align:left;padding-left:9px;overflow:hidden">modern</div>
  <div class="abs" style="left:189px;top:10px;width:22px;height:25px;background:linear-gradient(90deg,rgba(15,15,17,0),#0f0f11 85%)"></div>
  <div class="chip" style="left:212px;width:24px"><svg width="24" height="25" viewBox="0 0 24 25" fill="none" stroke="#c8cacd" stroke-width="1.4" stroke-linecap="round" stroke-linejoin="round"><path d="M8.6 11 L12 14.4 L15.4 11"/></svg></div>

  <div class="h1" style="top:48px">Recents</div><div class="va" style="top:50px">View all</div>
  <div class="h1" style="top:185px">Themes</div><div class="va" style="top:187px">View all</div>
  <div class="h1" style="top:419px">Fonts</div><div class="va" style="top:421px">View all</div>
  <div class="h1" style="top:556px">Colors</div>
  <div class="abs" style="left:15px;top:587px;color:#fff;font-size:13px;line-height:16px">Recommended</div><div class="va" style="top:587px">View all</div>

  <div id="cards" class="abs" style="left:15px;top:0;width:216px;height:690px;overflow:hidden">
    <!-- recents -->
    <div class="card" style="left:0;top:78px;background:#a86a67"><div class="t1" style="color:#fff;font-weight:bold;font-size:15.500px;top:16px;letter-spacing:.3px">Rubik-...</div><div class="t2" style="color:#fff;font-size:12.500px;top:36px;letter-spacing:.15px">Montserra...</div><div class="pal" style="top:57.500px"><i style="background:#a13a37"></i><i style="background:#c9a7a5"></i><i style="background:#e2d8d6"></i><i style="background:#ffffff"></i></div></div>
    <div class="card" style="left:96px;top:78px;background:#ecdcae"><div class="t1" style="color:#34316b;font-weight:bold;font-size:16.5px;top:15px;letter-spacing:.3px">IBMPl...</div><div class="t2" style="color:#34316b;font-size:11px;font-weight:bold;top:37.500px">Asap-SemiB...</div><div class="pal" style="top:57.500px"><i style="background:#b0b2e0"></i><i style="background:#dc8c78"></i><i style="background:#6d86d2"></i><i style="background:#3c4185"></i></div></div>
    <div class="card" style="left:192px;top:78px;background:#9085e0"><div class="t1" style="color:#f3ecd9;font-weight:bold;font-size:25px;top:14.500px;line-height:28px;left:8px">Aa</div><div class="pal" style="background:#4a4762"></div></div>
    <!-- themes row1 -->
    <div class="card" style="left:0;top:216px;background:#82a8dc"><div class="t1" style="color:#122a46;font-family:'Liberation Serif',serif;font-weight:bold;font-size:20px;top:13px">Glooc...</div><div class="t2" style="color:#122a46;font-family:'Liberation Serif',serif;font-size:14.500px;top:34.500px;letter-spacing:.2px">Lucette-R...</div><div class="pal" style="top:57.500px"><i style="background:#d2d8ac"></i><i style="background:#4a7ccb"></i><i style="background:#4b5d34"></i><i style="background:#0f2a49"></i></div></div>
    <div class="card" style="left:96px;top:216px;background:#a86a67"><div class="t1" style="color:#fff;font-weight:bold;font-size:15.500px;top:16px;letter-spacing:.3px">Rubik-...</div><div class="t2" style="color:#fff;font-size:12.500px;top:36px;letter-spacing:.15px">Montserra...</div><div class="pal" style="top:57.500px"><i style="background:#a13a37"></i><i style="background:#c9a7a5"></i><i style="background:#e2d8d6"></i><i style="background:#ffffff"></i></div></div>
    <div class="card" style="left:192px;top:216px;background:#ece4cb"><div class="t1" style="color:#143532;font-weight:bold;font-size:15px;top:16px">Sp</div><div class="t2" style="color:#143532;font-weight:bold;font-size:14px;top:35px">ZY</div><div class="pal" style="background:#8ed8b8"></div></div>
    <!-- themes row2 -->
    <div class="card" style="left:0;top:312px;background:#e4e0d8"><div class="t1" style="color:#222;font-family:'Liberation Serif',serif;font-size:19.500px;top:14px;letter-spacing:.2px">New Y...</div><div class="t2" style="color:#333;font-style:italic;font-size:15.500px;top:35.500px;letter-spacing:-.2px">SinkinSa...</div><div class="pal" style="top:57.500px"><i style="background:#a4c4ee"></i><i style="background:#7a7b7d"></i><i style="background:#4a4c50"></i><i style="background:#1e1f23"></i></div></div>
    <div class="card" style="left:96px;top:312px;background:#ecdcae"><div class="t1" style="color:#34316b;font-weight:bold;font-size:16.5px;top:15px;letter-spacing:.3px">IBMPl...</div><div class="t2" style="color:#34316b;font-size:11px;font-weight:bold;top:37.500px">Asap-SemiB...</div><div class="pal" style="top:57.500px"><i style="background:#b0b2e0"></i><i style="background:#dc8c78"></i><i style="background:#6d86d2"></i><i style="background:#3c4185"></i></div></div>
    <div class="card" style="left:192px;top:312px;background:#d8622a"><div class="t1" style="color:#241612;font-weight:bold;font-size:17px;top:14px">Z&#39;</div><div class="t2" style="color:#241612;font-weight:bold;font-style:italic;font-size:11px;top:38px">Gro</div><div class="pal" style="background:#c9caf0"></div></div>
    <!-- fonts -->
    <div class="card" style="left:0;top:449px;background:#222326"><div class="t1" style="color:#fff;font-weight:bold;font-size:15.500px;top:18px;left:8px;letter-spacing:.3px">Tenada-...</div><div class="t2" style="color:#fff;font-size:13px;top:37px;left:9px">Zacbel X-E...</div><div class="t2" style="color:#fff;font-size:10px;top:55px;left:8px">Stilu-Regular</div></div>
    <div class="card" style="left:96px;top:449px;background:#222326"><div class="t1" style="color:#fff;font-weight:bold;font-size:18px;top:17px;left:6px;letter-spacing:.8px">Glute...</div><div class="t2" style="color:#fff;font-weight:bold;font-size:12px;top:36px;left:6px">Baloo-Reg...</div><div class="t2" style="color:#fff;font-weight:bold;font-size:8px;top:54px;left:6px;letter-spacing:.2px">HammersmithOn...</div></div>
    <div class="card" style="left:192px;top:449px;background:#222326"><div class="t1" style="color:#fff;font-weight:bold;font-size:15px;top:16px;left:9px">Ru</div><div class="t2" style="color:#fff;font-size:9px;top:56px;left:8px">Mor</div></div>
    <!-- colors -->
    <div class="card" style="left:0;top:614px;background:#e6dbd0"><div class="t1" style="color:#4e3322;font-weight:bold;font-size:25px;top:14.500px;left:7.500px;line-height:28px">Aa</div><div class="pal" style="top:57.500px"><i style="background:#d9b88c"></i><i style="background:#b07f4c"></i><i style="background:#7e5430"></i><i style="background:#543828"></i></div></div>
    <div class="card" style="left:96px;top:614px;background:#9389e3"><div class="t1" style="color:#f7efe2;font-weight:bold;font-size:25px;top:14.500px;left:7.500px;line-height:28px">Aa</div><div class="pal" style="top:57.500px"><i style="background:#4a4762"></i><i style="background:#6fd3ae"></i><i style="background:#a9dcf7"></i><i style="background:#f3f1dc"></i></div></div>
    <div class="card" style="left:192px;top:614px;background:#2b3b7c"><div class="t1" style="color:#fff;font-weight:bold;font-size:25px;top:14.500px;left:7.500px;line-height:28px">Aa</div><div class="pal" style="background:#5472b0"></div></div>
  </div>
  <div class="arrow" style="top:112px"><svg width="20" height="20" viewBox="0 0 20 20" fill="none" stroke="#d0d2d5" stroke-width="1.3" stroke-linecap="round" stroke-linejoin="round"><path d="M8.6 6.8 L11.8 10 L8.6 13.2"/></svg></div>
  <div class="arrow" style="top:298px"><svg width="20" height="20" viewBox="0 0 20 20" fill="none" stroke="#d0d2d5" stroke-width="1.3" stroke-linecap="round" stroke-linejoin="round"><path d="M8.6 6.8 L11.8 10 L8.6 13.2"/></svg></div>
  <div class="arrow" style="top:483px"><svg width="20" height="20" viewBox="0 0 20 20" fill="none" stroke="#d0d2d5" stroke-width="1.3" stroke-linecap="round" stroke-linejoin="round"><path d="M8.6 6.8 L11.8 10 L8.6 13.2"/></svg></div>
  <div class="arrow" style="top:648px"><svg width="20" height="20" viewBox="0 0 20 20" fill="none" stroke="#d0d2d5" stroke-width="1.3" stroke-linecap="round" stroke-linejoin="round"><path d="M8.6 6.8 L11.8 10 L8.6 13.2"/></svg></div>
</div>

<!-- SIDEBAR -->
<div id="side">
  <svg class="abs" style="left:21px;top:13px" width="24" height="19" viewBox="0 0 24 19" fill="none" stroke="#fff" stroke-width="2.900" stroke-linejoin="round" stroke-linecap="butt"><path d="M18 2.700 H2.600 V5.400 L22.800 16.200"/><path d="M18 16.500 H2.600 V13.800 L22.800 3"/></svg>
  <div class="sdiv" style="top:47px"></div>
  <div class="sitem" style="top:69px"><svg width="20" height="20" viewBox="0 0 20 20" fill="none" stroke="#c6c8cc" stroke-width="1.5" stroke-linecap="round"><rect x="3.2" y="3" width="8.6" height="13.6" rx="1.8"/><path d="M14.6 5.2v9.2M17.2 7v5.6"/></svg>Templates</div>
  <div id="designbtn"></div>
  <div class="sitem" style="top:123px;color:#fff"><svg width="20" height="20" viewBox="0 0 20 20" fill="none" stroke="#fff" stroke-width="1.500" stroke-linecap="round" stroke-linejoin="round"><path d="M4 16.600 L4.600 12 C6.200 8.400 11 4.800 15.200 4 C16 3.900 16.500 4.400 16.400 5.200 C15.600 9.400 12 14.200 8.400 15.800 Z"/><path d="M4.200 16.400 L7.800 12.800"/><path d="M4.400 9.800 C3.400 8.800 3.400 7.600 4.400 6.600 L6.400 4.600 C7.400 3.600 8.600 3.600 9.600 4.600"/><path d="M16.200 10.800 C17.200 11.800 17.200 13 16.200 14 L14.200 16 C13.200 17 12 17 11 16"/></svg>Design</div>
  <div class="sitem" style="top:177px"><svg width="20" height="20" viewBox="0 0 20 20" fill="none" stroke="#c6c8cc" stroke-width="1.5" stroke-linecap="round" stroke-linejoin="round"><path d="M6.4 15.4 H5.6 C3.4 15.4 2 13.8 2 12 C2 10.2 3.2 9 4.8 8.6 C4.8 5.6 7 3.4 10 3.4 C13 3.4 15.2 5.6 15.2 8.6 C16.8 9 18 10.2 18 12 C18 13.8 16.6 15.4 14.4 15.4 H13.6"/><path d="M10 16.6 V9.6 M7.4 12 L10 9.4 L12.6 12"/></svg>Upload</div>
  <div class="sitem" style="top:231px"><svg width="20" height="20" viewBox="0 0 20 20" fill="none" stroke="#c6c8cc" stroke-width="1.5" stroke-linecap="round" stroke-linejoin="round"><path d="M3.6 5.6 V3.6 H16.4 V5.6 M10 3.6 V16.4 M7.6 16.4 H12.4"/></svg>Text</div>
  <div class="sitem" style="top:285px"><svg width="20" height="20" viewBox="0 0 20 20" fill="none" stroke="#c6c8cc" stroke-width="1.5" stroke-linecap="round" stroke-linejoin="round"><path d="M5.6 11.6 C3.6 11.2 2.6 9.6 2.6 7.8 C2.6 5.4 4.4 3.6 6.8 3.6 C7.6 3.6 8.4 3.8 9 4.2"/><path d="M9.4 3.4 H15.4 C16.4 3.4 17 4 17 5 V9.4"/><path d="M10.4 8.6 L15.6 16.4 H5.2 Z"/></svg>Shapes</div>
  <div class="sitem" style="top:339px"><svg width="20" height="20" viewBox="0 0 20 20" fill="none" stroke="#c6c8cc" stroke-width="1.5" stroke-linecap="round" stroke-linejoin="round"><rect x="3.6" y="3.4" width="12.8" height="13.2" rx="1.8"/><path d="M3.8 14.6 L8 10.8 L11.4 14.2"/><circle cx="12.2" cy="7.6" r="1.1" fill="#c6c8cc" stroke="none"/></svg>Photos</div>
  <div class="sitem" style="top:393px"><svg width="20" height="20" viewBox="0 0 20 20" fill="none" stroke="#c6c8cc" stroke-width="1.5" stroke-linecap="round" stroke-linejoin="round"><path d="M11.4 3.2 C7.2 2.4 3.2 5.6 3.2 10 C3.2 13.8 6.2 16.8 10 16.8 C14.4 16.8 17.6 12.8 16.8 8.6 C14.8 10.4 11.4 9.8 10.8 7.2 C10.4 5.6 10.6 4.2 11.4 3.2 Z"/><path d="M11.6 3.4 L16.6 8.4"/></svg>Stickers</div>
  <div class="sitem" style="top:447px"><svg width="20" height="20" viewBox="0 0 20 20" fill="none" stroke="#c6c8cc" stroke-width="1.5" stroke-linecap="round" stroke-linejoin="round"><rect x="3.8" y="3.8" width="12.4" height="12.4" rx="2"/><rect x="7.2" y="7.2" width="5.6" height="5.6" rx="1"/></svg>Frames</div>
  <div class="sitem" style="top:501px"><svg width="20" height="20" viewBox="0 0 20 20" fill="none" stroke="#c6c8cc" stroke-width="1.5" stroke-linecap="round" stroke-linejoin="round"><rect x="3.8" y="3.8" width="12.4" height="12.4" rx="2"/><path d="M9 4 V16 M9 10.4 H16"/></svg>Collage</div>
  <div class="sdiv" style="top:551px"></div>
  <div class="sitem" style="top:566px"><svg width="20" height="20" viewBox="0 0 20 20" fill="none" stroke="#c6c8cc" stroke-width="1.5" stroke-linejoin="round"><rect x="3.4" y="3.4" width="5.4" height="5.4" rx="1"/><rect x="11.2" y="3.4" width="5.4" height="5.4" rx="1"/><rect x="3.4" y="11.2" width="5.4" height="5.4" rx="1"/><rect x="11.2" y="11.2" width="5.4" height="5.4" rx="1"/></svg>Plugins</div>
  <svg class="abs" style="left:23px;top:656px" width="20" height="18" viewBox="0 0 20 18" fill="none" stroke="#c6c8cc" stroke-width="1.4" stroke-linecap="round"><rect x="2.4" y="3" width="15.2" height="11.6" rx="1.8"/><path d="M5.6 6.2h.2M8.6 6.2h.2M11.4 6.2h.2M14.2 6.2h.2M5.6 8.8h.2M8.6 8.8h.2M11.4 8.8h.2M14.2 8.8h.2M7 11.8h6"/></svg>
</div>

</div>
</body>
</html>
